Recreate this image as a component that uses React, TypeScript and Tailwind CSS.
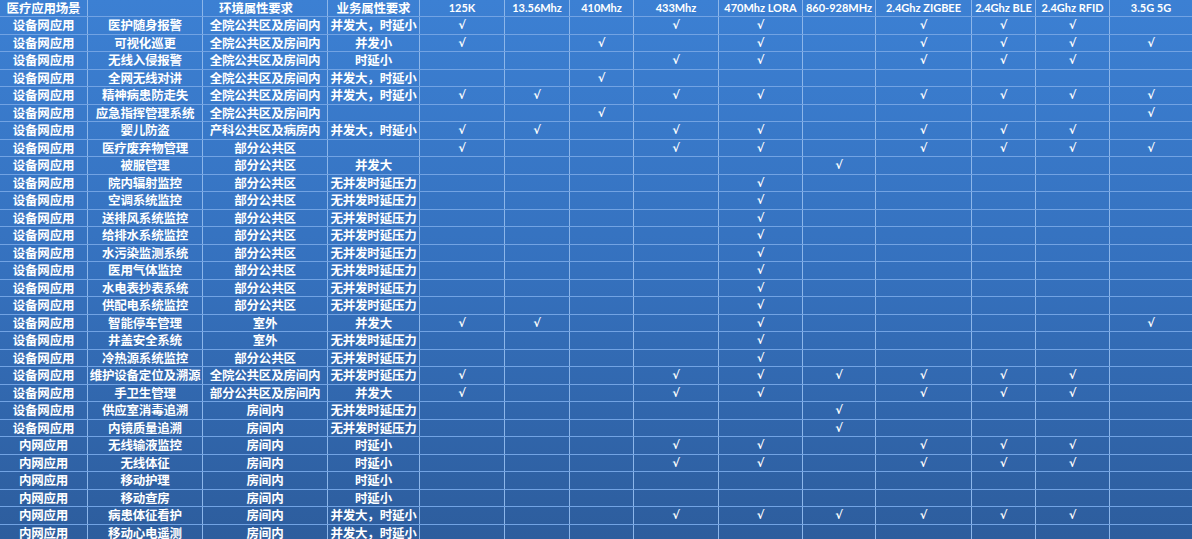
import React from "react";

const freqs = [
  "125K",
  "13.56Mhz",
  "410Mhz",
  "433Mhz",
  "470Mhz LORA",
  "860-928MHz",
  "2.4Ghz ZIGBEE",
  "2.4Ghz BLE",
  "2.4Ghz RFID",
  "3.5G 5G",
];

type Row = [string, string, string, string, number[]];

const A = "全院公共区及房间内";
const B = "部分公共区";
const R = "房间内";
const N = "无并发时延压力";
const BS = "并发大，时延小";

const rows: Row[] = [
  ["设备网应用", "医护随身报警", A, BS, [0, 3, 4, 6, 7, 8]],
  ["设备网应用", "可视化巡更", A, "并发小", [0, 2, 4, 6, 7, 8, 9]],
  ["设备网应用", "无线入侵报警", A, "时延小", [3, 4, 6, 7, 8]],
  ["设备网应用", "全网无线对讲", A, BS, [2]],
  ["设备网应用", "精神病患防走失", A, BS, [0, 1, 3, 4, 6, 7, 8, 9]],
  ["设备网应用", "应急指挥管理系统", A, "", [2, 9]],
  ["设备网应用", "婴儿防盗", "产科公共区及病房内", BS, [0, 1, 3, 4, 6, 7, 8]],
  ["设备网应用", "医疗废弃物管理", B, "", [0, 3, 4, 6, 7, 8, 9]],
  ["设备网应用", "被服管理", B, "并发大", [5]],
  ["设备网应用", "院内辐射监控", B, N, [4]],
  ["设备网应用", "空调系统监控", B, N, [4]],
  ["设备网应用", "送排风系统监控", B, N, [4]],
  ["设备网应用", "给排水系统监控", B, N, [4]],
  ["设备网应用", "水污染监测系统", B, N, [4]],
  ["设备网应用", "医用气体监控", B, N, [4]],
  ["设备网应用", "水电表抄表系统", B, N, [4]],
  ["设备网应用", "供配电系统监控", B, N, [4]],
  ["设备网应用", "智能停车管理", "室外", "并发大", [0, 1, 4, 9]],
  ["设备网应用", "井盖安全系统", "室外", N, [4]],
  ["设备网应用", "冷热源系统监控", B, N, [4]],
  ["设备网应用", "维护设备定位及溯源", A, N, [0, 3, 4, 5, 6, 7, 8]],
  ["设备网应用", "手卫生管理", "部分公共区及房间内", "并发大", [0, 3, 4, 6, 7, 8]],
  ["设备网应用", "供应室消毒追溯", R, N, [5]],
  ["设备网应用", "内镜质量追溯", R, N, [5]],
  ["内网应用", "无线输液监控", R, "时延小", [3, 4, 6, 7, 8]],
  ["内网应用", "无线体征", R, "时延小", [3, 4, 6, 7, 8]],
  ["内网应用", "移动护理", R, "时延小", []],
  ["内网应用", "移动查房", R, "时延小", []],
  ["内网应用", "病患体征看护", R, BS, [3, 4, 5, 6, 7, 8]],
  ["内网应用", "移动心电遥测", R, BS, []],
];

const GRID =
  "grid grid-cols-[88px_115px_125px_92px_85px_65px_64px_85px_84px_73px_96px_64px_74px_82px] border-b border-[#72a3e3]";
const CELL =
  "flex items-center justify-center whitespace-nowrap text-white border-r border-[#8cb6ea] last:border-r-0";
const CJK =
  "font-['Noto_Sans_CJK_SC','Noto_Sans',sans-serif] text-[12.5px] font-bold leading-[16px] tracking-[-0.2px]";
const LAT = "font-['Lato','Noto_Sans',sans-serif] text-[11px] font-bold leading-[16px]";
const CHK = "font-['DejaVu_Sans',sans-serif] text-[11.5px] font-bold leading-[16px]";

export default function App() {
  return (
    <div className="h-[539px] w-[1192px] overflow-hidden bg-linear-to-b from-[#3c80d3] via-[#3571be] to-[#2d5d9d]">
      <div className={GRID + " h-[17px]"}>
        <div className={CELL + " " + CJK}>医疗应用场景</div>
        <div className={CELL} />
        <div className={CELL + " pr-[18px] " + CJK}>环境属性要求</div>
        <div className={CELL + " " + CJK}>业务属性要求</div>
        {freqs.map((f) => (
          <div key={f} className={CELL + " " + LAT}>
            {f}
          </div>
        ))}
      </div>
      {rows.map((r, ri) => (
        <div key={ri} className={GRID + " h-[17.5px]"}>
          <div className={CELL + " " + CJK}>{r[0]}</div>
          <div className={CELL + " " + CJK}>{r[1]}</div>
          <div className={CELL + " " + CJK}>{r[2]}</div>
          <div className={CELL + " " + CJK}>{r[3]}</div>
          {freqs.map((f, i) => (
            <div key={f} className={CELL + " " + CHK}>
              {r[4].includes(i) ? "√" : ""}
            </div>
          ))}
        </div>
      ))}
    </div>
  );
}
